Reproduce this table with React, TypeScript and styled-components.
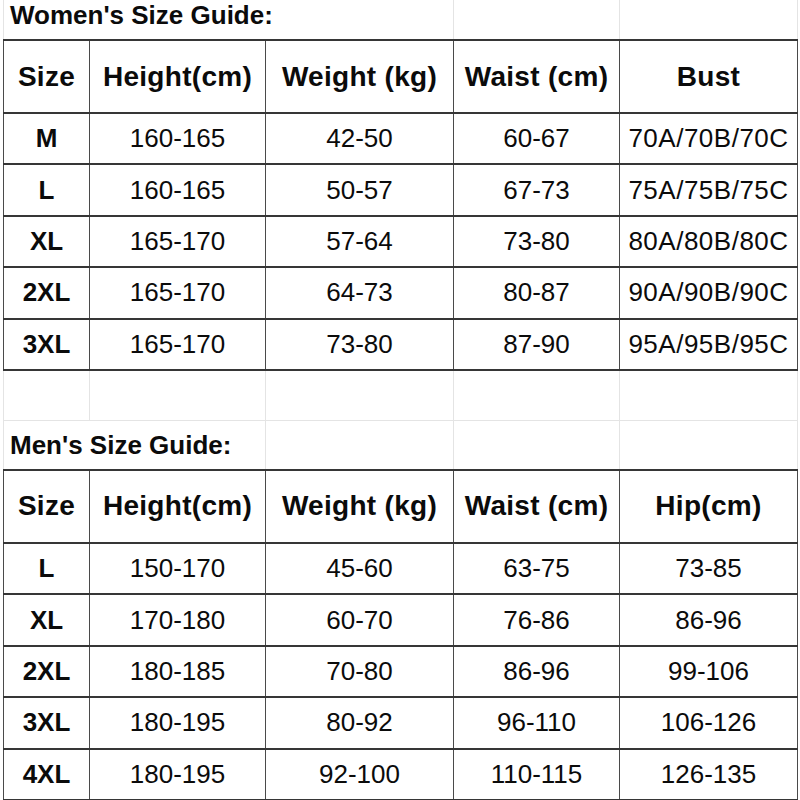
import React from "react";
import styled, { createGlobalStyle } from "styled-components";

const GlobalStyle = createGlobalStyle`
    html, body {
        margin: 0;
        padding: 0;
        background: #ffffff;
    }
    body {
        font-family: "Liberation Sans", Arial, sans-serif;
        color: #0b0b0b;
    }
`;

// column widths taken from the sheet
const COLS = [86, 176, 188, 166, 178];
const GRID = COLS.map((c) => `${c}px`).join(" ");

interface ISizeTable {
    title: string;
    titleSpan: number;
    headers: string[];
    rows: string[][];
}

const women: ISizeTable = {
    title: "Women's Size Guide:",
    titleSpan: 3,
    headers: ["Size", "Height(cm)", "Weight (kg)", "Waist (cm)", "Bust"],
    rows: [
        ["M", "160-165", "42-50", "60-67", "70A/70B/70C"],
        ["L", "160-165", "50-57", "67-73", "75A/75B/75C"],
        ["XL", "165-170", "57-64", "73-80", "80A/80B/80C"],
        ["2XL", "165-170", "64-73", "80-87", "90A/90B/90C"],
        ["3XL", "165-170", "73-80", "87-90", "95A/95B/95C"],
    ],
};

const men: ISizeTable = {
    title: "Men's Size Guide:",
    titleSpan: 2,
    headers: ["Size", "Height(cm)", "Weight (kg)", "Waist (cm)", "Hip(cm)"],
    rows: [
        ["L", "150-170", "45-60", "63-75", "73-85"],
        ["XL", "170-180", "60-70", "76-86", "86-96"],
        ["2XL", "180-185", "70-80", "86-96", "99-106"],
        ["3XL", "180-195", "80-92", "96-110", "106-126"],
        ["4XL", "180-195", "92-100", "110-115", "126-135"],
    ],
};

const SizeSection = ({ data, titleHeight }: { data: ISizeTable; titleHeight: number }) => {
    const rest = COLS.slice(data.titleSpan);
    return (
        <>
            <GridRow $height={titleHeight}>
                <TitleCell style={{ gridColumn: `span ${data.titleSpan}` }}>{data.title}</TitleCell>
                {rest.map((_, i) => (
                    <BlankCell key={i} />
                ))}
            </GridRow>
            <Table>
                <colgroup>
                    {COLS.map((w, i) => (
                        <col key={i} style={{ width: w }} />
                    ))}
                </colgroup>
                <thead>
                    <tr>
                        {data.headers.map((h) => (
                            <Th key={h}>{h}</Th>
                        ))}
                    </tr>
                </thead>
                <tbody>
                    {data.rows.map((r) => (
                        <tr key={r[0]}>
                            {r.map((v, i) => (
                                <Td key={i} $bold={i === 0} $wide={v.includes("/")}>
                                    {v}
                                </Td>
                            ))}
                        </tr>
                    ))}
                </tbody>
            </Table>
        </>
    );
};

export default function App() {
    return (
        <>
            <GlobalStyle />
            <Sheet>
                <SizeSection data={women} titleHeight={39} />
                <GridRow $height={50}>
                    {COLS.map((_, i) => (
                        <BlankCell key={i} $bottom />
                    ))}
                </GridRow>
                <SizeSection data={men} titleHeight={48} />
            </Sheet>
        </>
    );
}

const Sheet = styled.div`
    width: 800px;
    height: 800px;
    overflow: hidden;
    padding-left: 3px;
    box-sizing: border-box;
    display: flex;
    flex-direction: column;
`;

const GridRow = styled.div<{ $height: number }>`
    display: grid;
    grid-template-columns: ${GRID} 1fr;
    height: ${(p) => p.$height}px;
    flex-shrink: 0;
    border-left: 1px solid #e4e4e4;
    box-sizing: border-box;
`;

const TitleCell = styled.div`
    display: flex;
    align-items: flex-end;
    padding: 0 0 8px 6px;
    font-size: 26px;
    font-weight: 700;
    white-space: nowrap;
    border-right: 1px solid #e4e4e4;
`;

const BlankCell = styled.div<{ $bottom?: boolean }>`
    border-right: 1px solid #e4e4e4;
    border-bottom: ${(p) => (p.$bottom ? "1px solid #e4e4e4" : "none")};
`;

const Table = styled.table`
    border-collapse: collapse;
    table-layout: fixed;
    width: 794px;
    flex-shrink: 0;
    th,
    td {
        border-top: 2px solid #363636;
        border-bottom: 2px solid #363636;
        border-left: 1.5px solid #4a4a4a;
        border-right: 1.5px solid #4a4a4a;
        text-align: center;
        padding: 0;
        white-space: nowrap;
    }
`;

const Th = styled.th`
    height: 71px;
    font-size: 28px;
    font-weight: 700;
    letter-spacing: 0.3px;
`;

const Td = styled.td<{ $bold?: boolean; $wide?: boolean }>`
    height: 49.4px;
    font-size: 26px;
    font-weight: ${(p) => (p.$bold ? 700 : 400)};
    letter-spacing: ${(p) => (p.$wide ? "0.5px" : "0")};
`;
